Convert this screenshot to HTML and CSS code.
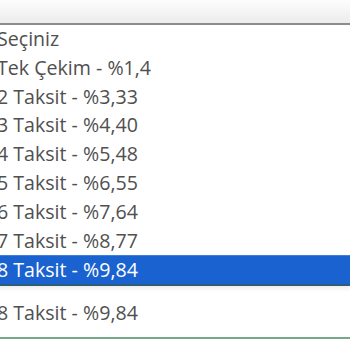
FILE: index.html
```html
<!DOCTYPE html>
<html lang="tr">
<head>
  <meta charset="UTF-8">
  <title>Taksit Seçimi</title>
  <link rel="stylesheet" href="styles.css">
</head>
<body>
  <div class="top-bar"></div>

  <ul class="option-list">
    <li>Seçiniz</li>
    <li>Tek Çekim - %1,4</li>
    <li>2 Taksit - %3,33</li>
    <li>3 Taksit - %4,40</li>
    <li>4 Taksit - %5,48</li>
    <li>5 Taksit - %6,55</li>
    <li>6 Taksit - %7,64</li>
    <li>7 Taksit - %8,77</li>
    <li class="selected">8 Taksit - %9,84</li>
  </ul>

  <div class="select-box">8 Taksit - %9,84</div>
</body>
</html>
```

FILE: styles.css
```css
* {
  margin: 0;
  padding: 0;
  box-sizing: border-box;
}

body {
  background: #ffffff;
  font-family: 'Open Sans', 'Noto Sans', sans-serif;
  color: #505050;
  overflow: hidden;
}

.top-bar {
  height: 25px;
  background: linear-gradient(#fdfdfd, #ececec);
  border-bottom: 2px solid #8c8c8c;
}

.option-list {
  list-style: none;
  margin-left: -3px;
  font-size: 19.6px;
  box-shadow: 0 3px 4px rgba(0,0,0,0.07);
}

.option-list li {
  height: 28.8px;
  line-height: 28.8px;
  white-space: nowrap;
}

.option-list li.selected {
  background: #1a62d0;
  color: #ffffff;
  height: 31px;
  border-top: 1px solid #3f7ee0;
  border-bottom: 2px solid #2d5e78;
  line-height: 28px;
}

.select-box {
  margin-left: -3px;
  margin-top: 11px;
  height: 42px;
  line-height: 32px;
  font-size: 19.6px;
  border-bottom: 2px solid #78a88a;
  box-shadow: 0 2px 0 #e2f2e6;
}
```
